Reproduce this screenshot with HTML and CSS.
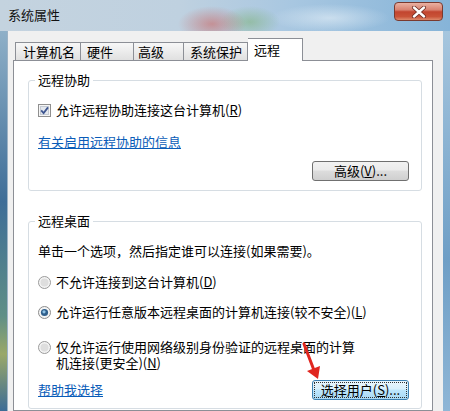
FILE: index.html
```html
<!DOCTYPE html>
<html lang="zh-CN">
<head>
    <meta charset="UTF-8">
    <meta name="viewport" content="width=device-width, initial-scale=1.0">
    <title>系统属性</title>
    <link rel="stylesheet" href="styles.css">
</head>
<body>
    <div class="window">
        <div class="titlebar">
            <span class="title">系统属性</span>
            <button class="close" aria-label="关闭">
                <svg width="16" height="12" viewBox="0 0 16 12">
                    <path d="M3 1.5 L13 10.5 M13 1.5 L3 10.5" stroke="#6b2a20" stroke-width="4" stroke-linecap="round"/>
                    <path d="M3 1.5 L13 10.5 M13 1.5 L3 10.5" stroke="#fff" stroke-width="2.4" stroke-linecap="round"/>
                </svg>
            </button>
        </div>

        <div class="client">
            <div class="tabs">
                <div class="tab tab-name">计算机名</div>
                <div class="tab tab-hw">硬件</div>
                <div class="tab tab-adv">高级</div>
                <div class="tab tab-prot">系统保护</div>
                <div class="tab tab-remote active">远程</div>
            </div>

            <div class="panel">
                <fieldset class="group group-assist">
                    <legend>远程协助</legend>
                    <label class="option">
                        <svg class="box" width="13" height="13" viewBox="0 0 13 13">
                            <rect x="0.5" y="0.5" width="12" height="12" fill="#f6f6f6" stroke="#8f8f8f"/>
                            <rect x="2.5" y="2.5" width="8" height="8" fill="#e4e8ee" stroke="#c4cad3"/>
                            <path d="M3.2 6.4 L5.6 9 L10 3.4" fill="none" stroke="#3d5590" stroke-width="1.8"/>
                        </svg>
                        <span>允许远程协助连接这台计算机(<u>R</u>)</span>
                    </label>
                    <a class="link assist-link" href="#">有关启用远程协助的信息</a>
                    <div class="actions">
                        <button class="btn">高级(<u>V</u>)...</button>
                    </div>
                </fieldset>

                <fieldset class="group group-desktop">
                    <legend>远程桌面</legend>
                    <p class="hint">单击一个选项，然后指定谁可以连接(如果需要)。</p>
                    <label class="option opt-deny">
                        <svg class="box" width="13" height="13" viewBox="0 0 13 13">
                            <circle cx="6.5" cy="6.5" r="6" fill="#f4f4f4" stroke="#9a9a9a"/>
                            <circle cx="6.5" cy="6.5" r="4" fill="#dedede"/>
                        </svg>
                        <span>不允许连接到这台计算机(<u>D</u>)</span>
                    </label>
                    <label class="option opt-any">
                        <svg class="box" width="13" height="13" viewBox="0 0 13 13">
                            <circle cx="6.5" cy="6.5" r="6" fill="#f4f4f4" stroke="#8c8c8c"/>
                            <circle cx="6.5" cy="6.5" r="3.6" fill="#2f5f8c"/>
                            <circle cx="6" cy="5.8" r="1.6" fill="#8fc3e6"/>
                        </svg>
                        <span>允许运行任意版本远程桌面的计算机连接(较不安全)(<u>L</u>)</span>
                    </label>
                    <label class="option opt-nla">
                        <svg class="box" width="13" height="13" viewBox="0 0 13 13">
                            <circle cx="6.5" cy="6.5" r="6" fill="#f4f4f4" stroke="#9a9a9a"/>
                            <circle cx="6.5" cy="6.5" r="4" fill="#dedede"/>
                        </svg>
                        <span>仅允许运行使用网络级别身份验证的远程桌面的计算<br>机连接(更安全)(<u>N</u>)</span>
                    </label>
                    <div class="footer-row">
                        <a class="link" href="#">帮助我选择</a>
                        <button class="btn focused"><span class="focus-ring">选择用户(<u>S</u>)...</span></button>
                    </div>
                </fieldset>
            </div>
        </div>

        <!-- red pointer drawn over the dialog -->
        <svg class="pointer" width="30" height="46" viewBox="0 0 30 46">
            <path d="M8 6 L17.5 31" stroke="#e0261f" stroke-width="3" stroke-linecap="round"/>
            <polygon points="22,41 24,28 11,33" fill="#e0261f"/>
        </svg>
    </div>
</body>
</html>
```

FILE: styles.css
```css
body {
    margin: 0;
    font-family: "Noto Sans CJK SC", "Liberation Sans", sans-serif;
    font-size: 13px;
    color: #000;
}
.window {
    position: relative;
    width: 450px;
    height: 411px;
    overflow: hidden;
    box-sizing: border-box;
    padding: 0 7px;
    display: flex;
    flex-direction: column;
    background:
        linear-gradient(180deg, #8fb0c8, #3e6d97 45%, #5f8f86 75%, #9aa868 85%, #3c6c96) 0 31px / 7px 380px no-repeat,
        linear-gradient(180deg, #a6c6de, #6f9fc6 60%, #8fb6d6) 443px 31px / 7px 380px no-repeat,
        radial-gradient(ellipse 34px 18px at 212px 24px, rgba(205, 95, 90, 0.55), transparent),
        radial-gradient(ellipse 30px 16px at 250px 22px, rgba(120, 175, 110, 0.5), transparent),
        radial-gradient(ellipse 60px 14px at 330px 18px, rgba(230, 240, 248, 0.6), transparent),
        linear-gradient(90deg, #c4d3df 0%, #bfd1e0 40%, #a8c7e1 65%, #86b4d8 100%);
}
.titlebar {
    height: 31px;
    display: flex;
    justify-content: space-between;
    align-items: flex-start;
}
.title {
    margin-left: 1px;
    line-height: 30px;
    color: #111;
}
.close {
    margin-top: 2px;
    width: 49px;
    height: 19px;
    padding: 0;
    border: 1px solid #7a3a2f;
    border-radius: 4px;
    background: linear-gradient(180deg, #eab1a2 0%, #d98371 40%, #c2452f 52%, #c95338 80%, #dd8a6c 100%);
    display: flex;
    align-items: center;
    justify-content: center;
}
.client {
    flex: 1;
    min-height: 0;
    background: #f0f0f0;
    border-left: 1px solid #9db3c6;
    padding: 7px 10px 0 5px;
    display: flex;
    flex-direction: column;
}
.tabs {
    height: 22px;
    padding-left: 2px;
    display: flex;
    align-items: flex-end;
}
.tab {
    box-sizing: border-box;
    height: 18px;
    padding-left: 6px;
    line-height: 17px;
    border: 1px solid #8c8f96;
    border-bottom: none;
    border-left: none;
    background: linear-gradient(180deg, #f7f7f7 0%, #ececec 50%, #e0e0e0 100%);
    white-space: nowrap;
}
.tab-name { width: 66px; border-left: 1px solid #8c8f96; padding-left: 7px; }
.tab-hw { width: 53px; }
.tab-adv { width: 50px; padding-left: 4px; }
.tab-prot { width: 64px; }
.tab.active {
    width: 55px;
    height: 23px;
    margin-bottom: -1px;
    line-height: 22px;
    background: #fff;
    position: relative;
    z-index: 1;
}
.panel {
    flex: 1;
    background: #fff;
    border: 1px solid #8c8f96;
    padding: 0 10px 0 14px;
}
.group {
    margin: 0;
    padding: 0 12px 9px 9px;
    border: 1px solid #d6dde3;
    border-radius: 3px;
    min-width: 0;
}
.group-assist {
    margin-top: 11px;
}
.group-desktop {
    margin-top: 22px;
    padding-bottom: 8px;
}
.group legend {
    padding: 0 3px;
    margin-left: -3px;
    line-height: 16px;
}
.option {
    display: flex;
    align-items: center;
    gap: 5px;
    line-height: 16px;
}
.option .box {
    flex: none;
}
.group-assist .option {
    margin-top: 14px;
}
.link {
    display: inline-block;
    color: #0a5cb8;
    text-decoration: underline;
    line-height: 16px;
}
.assist-link {
    margin-top: 16px;
}
.actions {
    margin-top: 10px;
    display: flex;
    justify-content: flex-end;
}
.btn {
    box-sizing: border-box;
    width: 97px;
    height: 20px;
    padding: 0;
    font-family: inherit;
    font-size: 13px;
    line-height: 16px;
    color: #000;
    border: 1px solid #707070;
    border-radius: 3px;
    background: linear-gradient(180deg, #f2f2f2 0%, #ebebeb 45%, #dddddd 50%, #cfcfcf 100%);
}
.btn.focused {
    border-color: #3c7fb1;
    background: linear-gradient(180deg, #eaf6fd 0%, #d9f0fc 45%, #bee6fd 50%, #a7d9f5 100%);
    padding: 2px;
}
.focus-ring {
    display: block;
    height: 14px;
    line-height: 14px;
    outline: 1px dotted #333;
}
.hint {
    margin: 14px 0 0;
    line-height: 16px;
}
.opt-deny { margin-top: 15px; }
.opt-any { margin-top: 14px; }
.opt-nla {
    margin-top: 19px;
    align-items: flex-start;
    line-height: 16px;
}
.opt-nla .box {
    margin-top: 2px;
}
.footer-row {
    margin-top: 9px;
    display: flex;
    justify-content: space-between;
    align-items: center;
}
.pointer {
    position: absolute;
    left: 296px;
    top: 338px;
}
```
